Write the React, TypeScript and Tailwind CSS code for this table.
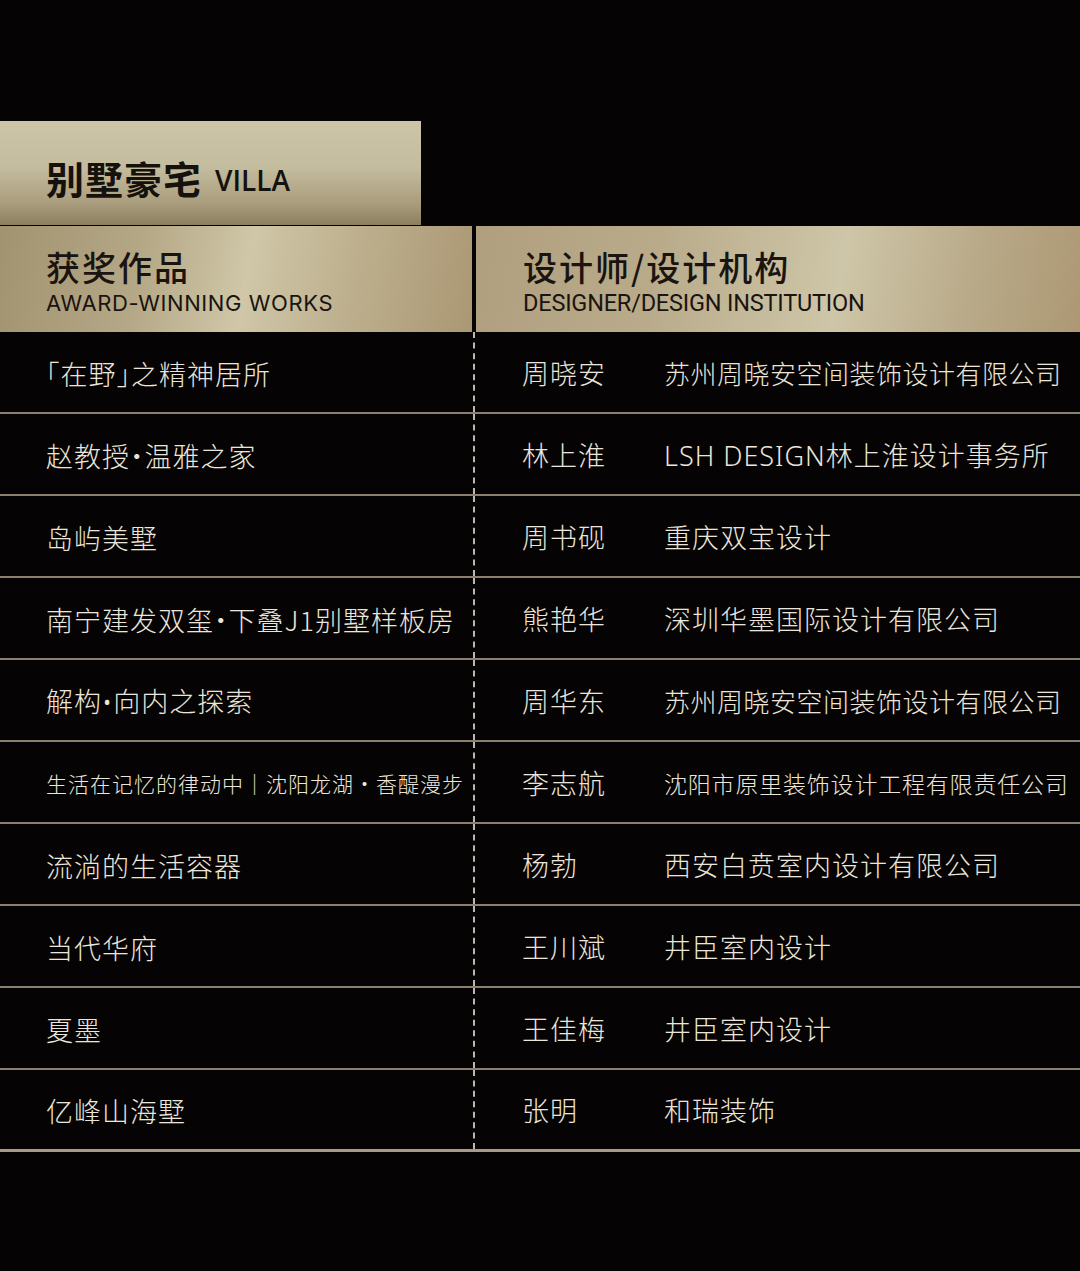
import React from 'react';

interface Row {
  work: string;
  designer: string;
  company: string;
  small?: boolean;
  tight?: boolean;
}

const rows: Row[] = [
  { work: '「在野」之精神居所', designer: '周晓安', company: '苏州周晓安空间装饰设计有限公司', tight: true },
  { work: '赵教授·温雅之家', designer: '林上淮', company: 'LSH DESIGN林上淮设计事务所' },
  { work: '岛屿美墅', designer: '周书砚', company: '重庆双宝设计' },
  { work: '南宁建发双玺·下叠J1别墅样板房', designer: '熊艳华', company: '深圳华墨国际设计有限公司' },
  { work: '解构•向内之探索', designer: '周华东', company: '苏州周晓安空间装饰设计有限公司', tight: true },
  { work: '生活在记忆的律动中｜沈阳龙湖·香醍漫步', designer: '李志航', company: '沈阳市原里装饰设计工程有限责任公司', small: true },
  { work: '流淌的生活容器', designer: '杨勃', company: '西安白贲室内设计有限公司' },
  { work: '当代华府', designer: '王川斌', company: '井臣室内设计' },
  { work: '夏墨', designer: '王佳梅', company: '井臣室内设计' },
  { work: '亿峰山海墅', designer: '张明', company: '和瑞装饰' },
];

// the bullet in "解构•向内" is a narrow western glyph in the original
function WorkTitle({ text }: { text: string }) {
  const parts = text.split('•');
  return (
    <>
      {parts.map((p, i) => (
        <React.Fragment key={i}>
          {i > 0 && <span className="font-['Noto_Sans',sans-serif]">•</span>}
          {p}
        </React.Fragment>
      ))}
    </>
  );
}

const cjk = "font-['Noto_Sans_CJK_SC','Noto_Sans',sans-serif]";
const latinFirst = "font-['Noto_Sans','Noto_Sans_CJK_SC',sans-serif]";

export default function App() {
  return (
    <div className={`w-[1080px] h-[1271px] bg-[#050304] pt-[121px] ${cjk}`}>
      {/* section title */}
      <div className="w-[421px] h-[104px] flex items-center pl-[46px] pt-[8px] bg-[linear-gradient(180deg,#ccc5a9_0%,#c4bc9e_45%,#a99c7c_80%,#8c7f60_100%)]">
        <span className="text-[38px] font-bold text-[#15110d] tracking-[1px]">别墅豪宅</span>
        <span className="ml-[13px] mt-[6px] text-[28px] font-semibold text-[#15110d] font-['Open_Sans',sans-serif]">VILLA</span>
      </div>

      {/* column headers */}
      <div className="mt-[1px] flex h-[106px]">
        <div className="w-[472px] shrink-0 flex flex-col justify-center pl-[46px] pt-[4px] bg-[linear-gradient(100deg,#a29370_0%,#b5a886_30%,#cfc7a8_52%,#bcae8c_75%,#ab9774_100%)]">
          <div className="text-[34px] font-medium leading-[38px] tracking-[2px] text-[#1a1410]">获奖作品</div>
          <div className="mt-[5px] text-[22px] leading-[24px] text-[#1a1410] font-['Inter',sans-serif] tracking-[0.6px]">AWARD-WINNING WORKS</div>
        </div>
        <div className="w-[4px] shrink-0 bg-[#050304]" />
        <div className="flex-1 flex flex-col justify-center pl-[47px] pt-[4px] bg-[linear-gradient(100deg,#b09f7e_0%,#b9ab8a_30%,#cec6a8_60%,#b8a988_82%,#ad9874_100%)]">
          <div className="text-[34px] font-medium leading-[38px] tracking-[2px] text-[#1a1410]">设计师/设计机构</div>
          <div className="mt-[5px] text-[23.5px] leading-[24px] text-[#1a1410] font-['Roboto',sans-serif] tracking-[-0.2px]">DESIGNER/DESIGN INSTITUTION</div>
        </div>
      </div>

      {/* rows */}
      <div>
        {rows.map((row, i) => (
          <div
            key={i}
            className={`flex h-[82px] ${i === rows.length - 1 ? 'border-b-[3px] border-[#a49b89]' : 'border-b-2 border-[#8a8171]'}`}
          >
            <div className="w-[475px] shrink-0 flex items-center pl-[46px] pt-[4px] border-r-2 border-dashed border-[#bdb6aa]">
              <span
                className={`${row.small ? 'text-[21px] tracking-[1px]' : "text-[27px] tracking-[1px] [font-feature-settings:'halt']"} font-light text-[#ece6da] whitespace-nowrap`}
              >
                <WorkTitle text={row.work} />
              </span>
            </div>
            <div className={`flex-1 min-w-0 flex items-center pl-[47px] pt-[4px] ${latinFirst}`}>
              <span className="w-[142px] shrink-0 text-[27px] tracking-[1px] font-light text-[#ece6da]">{row.designer}</span>
              <span
                className={`${row.small ? 'text-[23px] tracking-[0.8px]' : row.tight ? 'text-[26px] tracking-[0.5px]' : 'text-[27px] tracking-[1px]'} font-light text-[#ece6da] whitespace-nowrap`}
              >
                {row.company}
              </span>
            </div>
          </div>
        ))}
      </div>
    </div>
  );
}
